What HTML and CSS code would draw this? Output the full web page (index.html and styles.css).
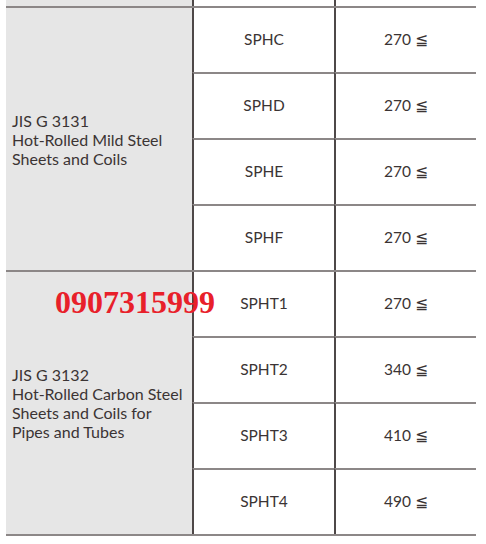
FILE: index.html
```html
<!DOCTYPE html>
<html>
<head>
<meta charset="utf-8">
<link rel="stylesheet" href="styles.css">
</head>
<body>
<div class="sheet">
  <div class="top">
    <div class="gray"></div>
    <div class="cell"></div>
    <div class="cell"></div>
  </div>
  <div class="group">
    <div class="spec">JIS G 3131<br>Hot-Rolled Mild Steel<br>Sheets and Coils</div>
    <div class="cell first">SPHC</div><div class="cell first">270 ≦</div>
    <div class="cell">SPHD</div><div class="cell">270 ≦</div>
    <div class="cell">SPHE</div><div class="cell">270 ≦</div>
    <div class="cell">SPHF</div><div class="cell">270 ≦</div>
  </div>
  <div class="group last">
    <div class="spec">JIS G 3132<br>Hot-Rolled Carbon Steel<br>Sheets and Coils for<br>Pipes and Tubes</div>
    <div class="cell first">SPHT1</div><div class="cell first">270 ≦</div>
    <div class="cell">SPHT2</div><div class="cell">340 ≦</div>
    <div class="cell">SPHT3</div><div class="cell">410 ≦</div>
    <div class="cell">SPHT4</div><div class="cell">490 ≦</div>
  </div>
  <div class="phone">0907315999</div>
</div>
</body>
</html>
```
FILE: styles.css
```css
html, body {
  margin: 0;
  padding: 0;
  background: #ffffff;
}
.sheet {
  position: relative;
  margin-left: 6px;
  width: 470px;
  font-family: Lato, "DejaVu Sans", sans-serif;
  font-size: 15.5px;
  color: #3b3434;
}
.top {
  display: grid;
  grid-template-columns: 186px 142px 142px;
  height: 6px;
}
.gray {
  background: #e6e6e6;
}
.group {
  display: grid;
  grid-template-columns: 186px 142px 142px;
  grid-template-rows: 64px 66px 66px 66px;
  border-top: 2px solid #8c8787;
}
.group.last {
  border-bottom: 2px solid #8c8787;
}
.spec {
  grid-row: 1 / span 4;
  background: #e6e6e6;
  display: flex;
  align-items: center;
  padding-left: 6px;
  font-size: 16px;
  line-height: 19px;
}
.cell {
  box-sizing: border-box;
  border-left: 2px solid #4e4848;
  border-top: 2px solid #8c8787;
  display: flex;
  align-items: center;
  justify-content: center;
  padding-bottom: 2px;
}
.cell.first {
  border-top: none;
}
.top .cell {
  border-top: none;
}
.phone {
  position: absolute;
  left: 49px;
  top: 286px;
  font-family: "Liberation Serif", serif;
  font-weight: bold;
  font-size: 32px;
  line-height: 32px;
  color: #e8202a;
}
```
